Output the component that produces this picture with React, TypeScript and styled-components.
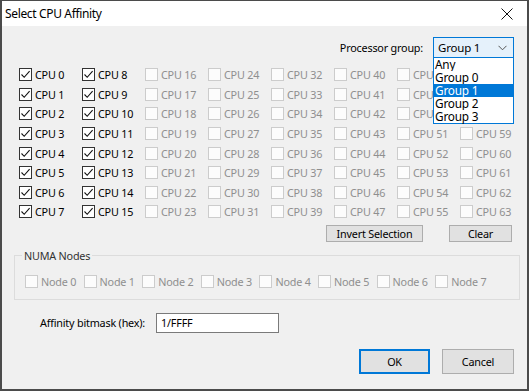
import React from "react";
import styled, { createGlobalStyle } from "styled-components";

const Global = createGlobalStyle`
  html, body { margin: 0; padding: 0; background: #f0f0f0; }
  * { box-sizing: border-box; }
`;

const FONT = `"Segoe UI", "Noto Sans", "Open Sans", sans-serif`;

const Window = styled.div`
  width: 529px;
  height: 391px;
  display: flex;
  flex-direction: column;
  border: 1px solid #4b4b4b;
  border-width: 1px 2px 2px 2px;
  background: #f0f0f0;
  font-family: ${FONT};
  font-size: 10.8px;
  letter-spacing: -0.2px;
  color: #000;
  overflow: hidden;
`;

const TitleBar = styled.div`
  height: 25px;
  flex: none;
  background: #fff;
  display: flex;
  align-items: center;
  justify-content: space-between;
  padding: 0 14px 0 3px;
  font-size: 12px;
  letter-spacing: -0.35px;
`;

const Body = styled.div`
  flex: 1;
  display: flex;
  flex-direction: column;
  padding: 11px 13px 0 17px;
`;

const TopRow = styled.div`
  display: flex;
  justify-content: flex-end;
  align-items: center;
  gap: 10px;
  height: 21px;
`;

const ComboWrap = styled.div`
  position: relative;
  width: 81px;
  height: 21px;
`;

const Combo = styled.div`
  width: 100%;
  height: 100%;
  border: 1px solid #0078d7;
  background: #e5f1fb;
  display: flex;
  align-items: center;
  justify-content: space-between;
  padding: 0 6px 0 4px;
  font-size: 11.5px;
`;

const DropList = styled.div`
  position: absolute;
  left: 0;
  top: 20px;
  width: 81px;
  background: #fff;
  border: 1px solid #0078d7;
  display: flex;
  flex-direction: column;
  z-index: 5;
`;

const DropItem = styled.div<{ $sel?: boolean }>`
  height: 13px;
  line-height: 13px;
  padding-left: 1px;
  font-size: 11.8px;
  background: ${(p) => (p.$sel ? "#0078d7" : "#fff")};
  color: ${(p) => (p.$sel ? "#fff" : "#000")};
`;

const CpuGrid = styled.div`
  margin-top: 7px;
  display: grid;
  grid-auto-flow: column;
  grid-template-rows: repeat(8, 19.6px);
  grid-template-columns: repeat(8, 63px);
`;

const CheckItem = styled.label<{ $disabled?: boolean }>`
  display: flex;
  align-items: center;
  gap: 3px;
  color: ${(p) => (p.$disabled ? "#8f8f8f" : "#000")};
  white-space: nowrap;
`;

const Box = styled.span<{ $disabled?: boolean }>`
  width: 13px;
  height: 13px;
  flex: none;
  border: 1px solid ${(p) => (p.$disabled ? "#cccccc" : "#333333")};
  background: ${(p) => (p.$disabled ? "#fcfcfc" : "#fff")};
  display: flex;
  align-items: center;
  justify-content: center;
`;

const ButtonRow = styled.div`
  display: flex;
  justify-content: flex-end;
  gap: 26px;
  margin-top: 3px;
  padding-right: 2px;
`;

const Button = styled.div<{ $w: number; $h: number; $default?: boolean }>`
  width: ${(p) => p.$w}px;
  height: ${(p) => p.$h}px;
  background: #e1e1e1;
  border: ${(p) => (p.$default ? "2px solid #0078d7" : "1px solid #adadad")};
  display: flex;
  align-items: center;
  justify-content: center;
`;

const GroupBox = styled.fieldset`
  margin: 7px 0 0 -5px;
  width: 506px;
  border: 1px solid #dcdcdc;
  padding: 11px 0 11px 10px;
  min-width: 0;
`;

const Legend = styled.legend`
  padding: 0 2px;
  margin-left: -3px;
  color: #333;
  line-height: 14px;
`;

const NodeRow = styled.div`
  display: grid;
  grid-template-columns: repeat(8, 58.6px);
  height: 14px;
`;

const MaskRow = styled.div`
  display: flex;
  align-items: center;
  gap: 11px;
  margin-top: 13px;
  padding-left: 21px;
`;

const TextInput = styled.div`
  width: 123px;
  height: 20px;
  border: 1px solid #7a7a7a;
  background: #fff;
  display: flex;
  align-items: center;
  padding-left: 4px;
`;

const Footer = styled.div`
  display: flex;
  justify-content: flex-end;
  gap: 12px;
  margin-top: 16px;
`;

const Check = () => (
  <svg width="11" height="11" viewBox="0 0 11 11">
    <path d="M1.5 5.5 L4.2 8.3 L9.6 2.2" fill="none" stroke="#111" strokeWidth="1.1" />
  </svg>
);

const CheckBox: React.FC<{ label: string; checked?: boolean; disabled?: boolean }> = ({
  label,
  checked,
  disabled,
}) => (
  <CheckItem $disabled={disabled}>
    <Box $disabled={disabled}>{checked && <Check />}</Box>
    {label}
  </CheckItem>
);

export default function App() {
  const cpus = Array.from({ length: 64 }, (_, i) => i);
  const nodes = Array.from({ length: 8 }, (_, i) => i);
  return (
    <>
      <Global />
      <Window>
        <TitleBar>
          <span>Select CPU Affinity</span>
          <svg width="12" height="12" viewBox="0 0 12 12">
            <path d="M0.5 0.5 L11.5 11.5 M11.5 0.5 L0.5 11.5" stroke="#111" strokeWidth="1" />
          </svg>
        </TitleBar>
        <Body>
          <TopRow>
            <span>Processor group:</span>
            <ComboWrap>
              <Combo>
                <span>Group 1</span>
                <svg width="9" height="6" viewBox="0 0 9 6">
                  <path d="M0.5 0.8 L4.5 4.8 L8.5 0.8" fill="none" stroke="#555" strokeWidth="1" />
                </svg>
              </Combo>
              <DropList>
                {["Any", "Group 0", "Group 1", "Group 2", "Group 3"].map((g) => (
                  <DropItem key={g} $sel={g === "Group 1"}>
                    {g}
                  </DropItem>
                ))}
              </DropList>
            </ComboWrap>
          </TopRow>
          <CpuGrid>
            {cpus.map((n) => (
              <CheckBox key={n} label={`CPU ${n}`} checked={n < 16} disabled={n >= 16} />
            ))}
          </CpuGrid>
          <ButtonRow>
            <Button $w={97} $h={17}>Invert Selection</Button>
            <Button $w={63} $h={17}>Clear</Button>
          </ButtonRow>
          <GroupBox>
            <Legend>NUMA Nodes</Legend>
            <NodeRow>
              {nodes.map((n) => (
                <CheckBox key={n} label={`Node ${n}`} disabled />
              ))}
            </NodeRow>
          </GroupBox>
          <MaskRow>
            <span>Affinity bitmask (hex):</span>
            <TextInput>1/FFFF</TextInput>
          </MaskRow>
          <Footer>
            <Button $w={71} $h={25} $default>OK</Button>
            <Button $w={72} $h={25}>Cancel</Button>
          </Footer>
        </Body>
      </Window>
    </>
  );
}
